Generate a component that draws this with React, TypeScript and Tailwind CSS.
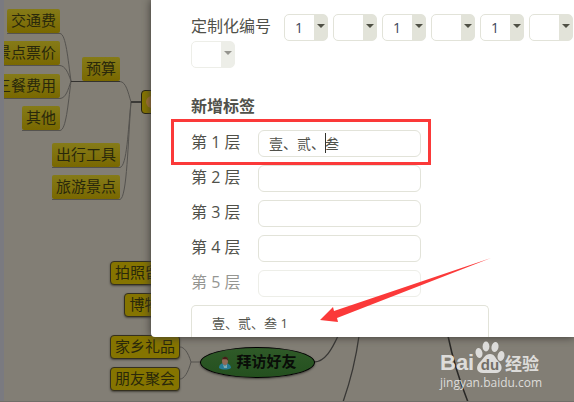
import { useState } from "react";

type MapNode = { text: string; box: string; framed?: boolean };

const nodes: MapNode[] = [
  { text: "交通费", box: "left-[7px] top-[9px] w-[53px]" },
  { text: "景点票价", box: "left-[-8px] top-[41px] w-[68px]" },
  { text: "三餐费用", box: "left-[-8px] top-[74px] w-[68px]" },
  { text: "其他", box: "left-[22px] top-[106px] w-[38px]" },
  { text: "预算", box: "left-[82px] top-[57px] w-[38px]" },
  { text: "出行工具", box: "left-[52px] top-[143px] w-[68px]" },
  { text: "旅游景点", box: "left-[52px] top-[175px] w-[68px]" },
  { text: "拍照留念", box: "left-[110px] top-[261px] w-[70px]", framed: true },
  { text: "博物馆", box: "left-[124px] top-[293px] w-[56px]", framed: true },
  { text: "家乡礼品", box: "left-[110px] top-[335px] w-[70px]", framed: true },
  { text: "朋友聚会", box: "left-[110px] top-[367px] w-[70px]", framed: true },
];

const numbering = ["1", "", "1", "", "1", "", ""];
const levels = [1, 2, 3, 4, 5];

function MindMap() {
  return (
    <div className="absolute inset-0 overflow-hidden border-b border-[#716e69] bg-[#827e75] font-['Liberation_Serif','Noto_Sans_CJK_SC',serif]">
      <svg className="absolute left-0 top-0" width="574" height="402" fill="none" stroke="#55534f">
        <path d="M7 33.5H60C66 34 68 60 71 81M4 65.5H60C65 66 68 72 71 81M4 98.5H60C66 98 68 90 71 81M22 130.5H60C66 130 68 105 71 81" />
        <path d="M71 81.5H120" stroke="#33322f" />
        <path d="M120 81.5C126 82 128 92 131 102M52 167.5H120C127 166 128 130 131 102M52 199.5H120C127 198 128 140 131 102" />
        <path d="M131 102H142" stroke="#3b3a37" strokeWidth="2" />
        <path d="M180 347C184 347 188 352 191 362C188 373 184 379 180 379M191 362H201" />
        <path d="M314 362C325 362 332 349 338 336M359 336C356 358 350 382 343 402" stroke="#383735" strokeWidth="1.3" />
        <path d="M448 336C453 360 460 382 468 402" stroke="#292826" strokeWidth="1.5" />
      </svg>
      {nodes.map((node) => (
        <div
          key={node.text}
          className={`absolute flex h-6 items-center justify-center whitespace-nowrap text-[15px] leading-none text-[#29280b] ${node.box} ${
            node.framed
              ? "rounded-sm border border-[#343020] bg-[#857400] shadow-[0_1px_2px_#48463f]"
              : "rounded-xs bg-linear-to-b from-[#857b18] to-[#796800]"
          }`}
        >
          {node.text}
        </div>
      ))}
      <div className="absolute left-[141px] top-[90px] flex h-6 w-24 items-center rounded-sm border border-[#242216] bg-[#857400] pl-1">
        <span className="size-3 rounded-full bg-[#a47435]" />
      </div>
      <div className="absolute left-[200px] top-[347px] flex h-[31px] w-[115px] items-center justify-center gap-1 rounded-[50%] border border-black bg-linear-to-b from-[#2f5a28] to-[#24501f] text-[15px] leading-none font-bold text-[#090d08] shadow-[0_1px_2px_#45433e]">
        <svg width="14" height="14" viewBox="0 0 14 14">
          <path d="M1 12C1 8 4 7 7 7s6 2 6 5c-3 2-9 2-12 0Z" fill="#267b96" />
          <path d="m5 8 2 2 2-2v4H6Z" fill="#80a9ae" />
          <ellipse cx="7" cy="5" rx="3" ry="4" fill="#906a57" />
          <path d="M4 5C3 0 11-1 10 5 9 2 6 4 4 3Z" fill="#441e18" />
        </svg>
        拜访好友
      </div>
      <div className="absolute inset-y-0 left-0 w-1 bg-[#7a7a80]" />
    </div>
  );
}

function NumberSelect({ value, index }: { value: string; index: number }) {
  return (
    <span className={`relative flex h-[27px] w-11 ${index === 6 ? "opacity-60" : ""}`}>
      <select
        aria-label={`编号 ${index + 1}`}
        defaultValue={value}
        className="w-full appearance-none rounded-[5px] border border-[#e2e3d9] bg-[linear-gradient(to_right,#fff_29px,#e2e3d9_29px)] pl-2.5 text-[14px] text-[#3c4658] outline-none"
      >
        <option value=""></option>
        <option value="1">1</option>
      </select>
      <svg className="pointer-events-none absolute right-[3px] top-2.5" width="8" height="5">
        <path d="M0 0h8L4 4Z" fill="#4f5045" />
      </svg>
    </span>
  );
}

function Watermark() {
  return (
    <div className="absolute left-[440px] top-[341px] text-[#dddcda]">
      <div className="flex h-8 items-end">
        <span className="w-[35px] font-['Liberation_Sans',sans-serif] text-[22px] leading-[20px] font-bold">Bai</span>
        <span className="relative h-8 w-[30px]">
          <svg width="30" height="32" viewBox="0 0 30 32" fill="currentColor">
            <ellipse cx="4" cy="12" rx="3.4" ry="5" transform="rotate(-12 4 12)" />
            <ellipse cx="11" cy="5.5" rx="3.4" ry="5" />
            <ellipse cx="20" cy="6" rx="3.5" ry="5" transform="rotate(12 20 6)" />
            <ellipse cx="26" cy="15" rx="3.4" ry="5" transform="rotate(12 26 15)" />
            <path d="M15 13c5 0 5 4 8 7 6 5 4 12-2 12H8c-7 0-8-7-2-12 3-3 4-7 9-7Z" />
          </svg>
          <span className="absolute inset-x-0 bottom-0 text-center font-['Liberation_Sans',sans-serif] text-[15px] leading-[16px] font-bold text-[#716e67]">du</span>
        </span>
        <span className="text-[17px] leading-[18px] font-bold">经验</span>
      </div>
      <div className="pt-px text-[12px] leading-[18px]">jingyan.baidu.com</div>
    </div>
  );
}

export default function App() {
  const [label, setLabel] = useState("壹、贰、叁");

  return (
    <main className="relative h-screen overflow-hidden font-['Open_Sans','Noto_Sans_CJK_SC',sans-serif] text-base text-[#50514a]">
      <MindMap />
      <section className="absolute left-[151px] right-0 top-0 rounded-bl-[4px] bg-white pl-10 pt-3.5 shadow-[0_0_8px_#393733]">
        <div className="flex flex-wrap items-start gap-x-[5px]">
          <span className="w-[88px] leading-6">定制化编号</span>
          {numbering.map((value, index) => (
            <NumberSelect key={index} value={value} index={index} />
          ))}
        </div>
        <h2 className="mb-3 mt-[26px] leading-6 font-bold">新增标签</h2>
        <div className="flex flex-col gap-2">
          {levels.map((level) => (
            <div key={level} className={`relative flex items-start ${level === 5 ? "opacity-60" : ""}`}>
              <label htmlFor={`level-${level}`} className="w-[67px] leading-6">
                第 {level} 层
              </label>
              <input
                id={`level-${level}`}
                value={level === 1 ? label : undefined}
                onChange={level === 1 ? (event) => setLabel(event.target.value) : undefined}
                className="h-[27px] w-[163px] rounded-[6px] border border-[#e2e3d9] bg-white px-2.5 pb-0.5 text-[14px] text-[#50514a] outline-none"
              />
              {level === 1 && (
                <>
                  <span className="absolute left-[134px] top-[3px] h-5 w-px bg-[#33342f]" />
                  <span className="pointer-events-none absolute -left-5 -top-[11px] h-[46px] w-[260px] border-3 border-[#fb3939]" />
                </>
              )}
            </div>
          ))}
        </div>
        <div className="mt-2 h-8 w-[298px] rounded-t-[5px] border border-b-0 border-[#e2e3d9] pl-5 pt-[7px] text-[13px] leading-5">
          {label} 1
        </div>
      </section>
      <svg className="pointer-events-none absolute left-[320px] top-[258px]" width="172" height="66">
        <path d="M0 62 13 49 14 53 171 0 17 60 18 64Z" fill="#fb3939" />
      </svg>
      <Watermark />
    </main>
  );
}
